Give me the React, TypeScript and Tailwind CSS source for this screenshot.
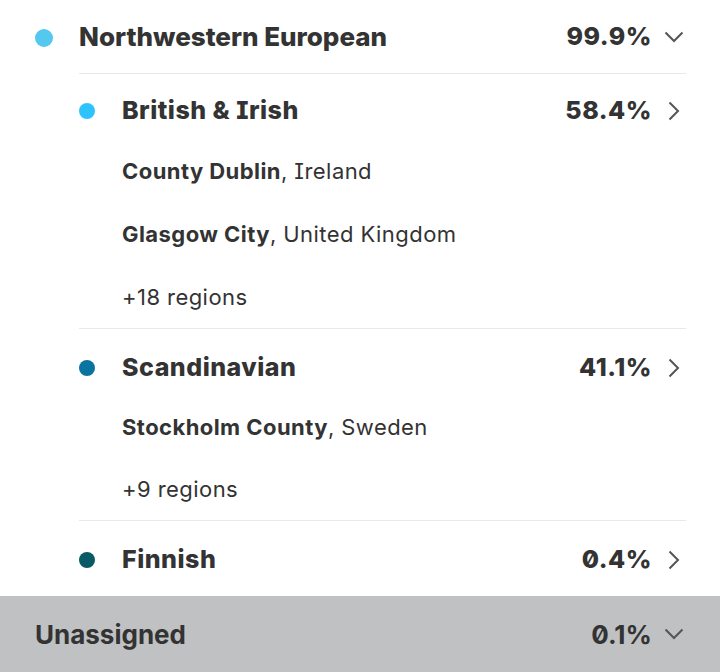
import React from "react";

const font = "font-['Inter','Noto_Sans',sans-serif] [font-feature-settings:'zero','cv08']";

function ChevronDown() {
  return (
    <svg width="20" height="12" viewBox="0 0 20 12" fill="none" className="shrink-0">
      <path d="M1.5 1.5 L10 10 L18.5 1.5" stroke="#555" strokeWidth="2" />
    </svg>
  );
}

function ChevronRight() {
  return (
    <svg width="12" height="20" viewBox="0 0 12 20" fill="none" className="shrink-0">
      <path d="M1.5 1.5 L10 10 L1.5 18.5" stroke="#555" strokeWidth="2" />
    </svg>
  );
}

function SubRegion({ bold, rest, h = "h-[63px]" }: { bold?: string; rest: string; h?: string }) {
  return (
    <div className={`${h} flex items-center pl-[43px] text-[22px] tracking-[0.02em] text-[#333]`}>
      {bold ? <span className="font-bold">{bold}</span> : null}
      <span>{rest}</span>
    </div>
  );
}

function SubHeader({ color, name, pct, pt }: { color: string; name: string; pct: string; pt: string }) {
  return (
    <div className={`flex items-center ${pt}`}>
      <span className="w-[16px] h-[16px] rounded-full shrink-0" style={{ background: color }} />
      <span className="ml-[27px] text-[25px] font-extrabold tracking-[0.02em] text-[#333] flex-1">{name}</span>
      <span className="text-[25px] font-extrabold tracking-[0.02em] text-[#333]">{pct}</span>
      <span className="w-[24px] ml-[10px] flex justify-center">
        <ChevronRight />
      </span>
    </div>
  );
}

export default function App() {
  return (
    <div className={`w-[720px] h-[672px] bg-white flex flex-col ${font}`}>
      <div className="pl-[35px] pr-[34px]">
        <div className="h-[73px] flex items-center">
          <span className="w-[18px] h-[18px] rounded-full bg-[#55c8f0] shrink-0 mt-[2px]" />
          <span className="ml-[26px] text-[26px] font-extrabold text-[#333] flex-1">Northwestern European</span>
          <span className="text-[25px] font-extrabold tracking-[0.02em] text-[#333]">99.9%</span>
          <span className="w-[24px] ml-[10px] flex justify-center">
            <ChevronDown />
          </span>
        </div>
        <div className="ml-[44px]">
          <div className="border-t border-[#e8e8e8]">
            <div className="h-[66px] flex flex-col justify-center">
              <SubHeader color="#2ec3ff" name="British & Irish" pct="58.4%" pt="pt-[8px]" />
            </div>
            <SubRegion bold="County Dublin" rest=", Ireland" />
            <SubRegion bold="Glasgow City" rest=", United Kingdom" />
            <SubRegion rest="+18 regions" h="h-[62px]" />
          </div>
          <div className="border-t border-[#e8e8e8]">
            <div className="h-[67px] flex flex-col justify-center">
              <SubHeader color="#0a73a0" name="Scandinavian" pct="41.1%" pt="pt-[10px]" />
            </div>
            <SubRegion bold="Stockholm County" rest=", Sweden" />
            <SubRegion rest="+9 regions" h="h-[61px]" />
          </div>
          <div className="border-t border-[#e8e8e8]">
            <div className="h-[75px] flex flex-col justify-center">
              <SubHeader color="#075a66" name="Finnish" pct="0.4%" pt="pt-[2px]" />
            </div>
          </div>
        </div>
      </div>
      <div className="h-[76px] bg-[#c0c1c3] flex items-center pl-[35px] pr-[34px]">
        <span className="flex-1 text-[26px] font-bold text-[#333]">Unassigned</span>
        <span className="text-[26px] font-bold text-[#333]">0.1%</span>
        <span className="w-[24px] ml-[10px] flex justify-center">
          <ChevronDown />
        </span>
      </div>
    </div>
  );
}
